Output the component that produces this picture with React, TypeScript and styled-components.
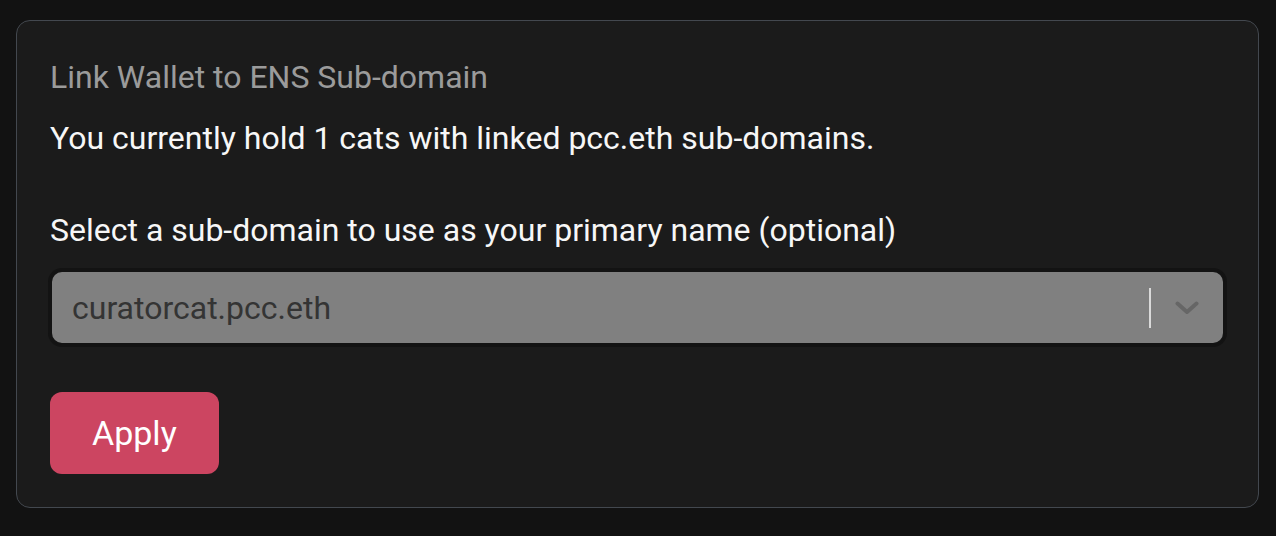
import React from "react";
import styled, { createGlobalStyle } from "styled-components";

const Global = createGlobalStyle`
  html, body {
    margin: 0;
    padding: 0;
    background: #121212;
    font-family: Roboto, "Liberation Sans", Arial, sans-serif;
  }
  * { box-sizing: border-box; }
`;

const Page = styled.div`
  padding: 20px 17px 28px 16px;
  min-height: 536px;
`;

const Card = styled.section`
  background: #1b1b1b;
  border: 1px solid #43484f;
  border-radius: 14px;
  padding: 37px 33px 33px 33px;
  display: flex;
  flex-direction: column;
  align-items: flex-start;
`;

const Title = styled.h2`
  margin: 0;
  font-size: 32px;
  line-height: 38px;
  font-weight: 400;
  color: #9b9b9b;
`;

const Text = styled.p<{ $top: number }>`
  margin: ${(p) => p.$top}px 0 0 0;
  font-size: 32px;
  line-height: 38px;
  font-weight: 400;
  color: #f7f7f7;
`;

const Select = styled.div`
  margin: 21px 0 0 0;
  align-self: stretch;
  height: 75px;
  background: #808080;
  border: 2px solid #131313;
  box-shadow: 0 0 0 2px #131313;
  border-radius: 12px;
  display: flex;
  align-items: center;
`;

const Value = styled.div`
  flex: 1;
  padding-left: 20px;
  font-size: 32px;
  color: #343434;
`;

const Indicators = styled.div`
  display: flex;
  align-items: center;
  height: 100%;
`;

const Separator = styled.span`
  width: 2px;
  height: 40px;
  background: #dadada;
`;

const Chevron = styled.div`
  width: 72px;
  display: flex;
  align-items: center;
  justify-content: center;
  color: #666666;
`;

const Button = styled.button`
  margin-top: 47px;
  height: 82px;
  padding: 0 42px;
  border: none;
  border-radius: 12px;
  background: #cc4561;
  color: #ffffff;
  font-family: inherit;
  font-size: 34px;
  font-weight: 400;
  cursor: pointer;
`;

export default function App() {
  return (
    <>
      <Global />
      <Page>
        <Card>
          <Title>Link Wallet to ENS Sub-domain</Title>
          <Text $top={23}>You currently hold 1 cats with linked pcc.eth sub-domains.</Text>
          <Text $top={54}>Select a sub-domain to use as your primary name (optional)</Text>
          <Select>
            <Value>curatorcat.pcc.eth</Value>
            <Indicators>
              <Separator />
              <Chevron>
                <svg width="24" height="14" viewBox="0 0 24 14" fill="none">
                  <path d="M2.5 2.5 L12 11 L21.5 2.5" stroke="currentColor" strokeWidth="4" strokeLinecap="round" strokeLinejoin="round" />
                </svg>
              </Chevron>
            </Indicators>
          </Select>
          <Button>Apply</Button>
        </Card>
      </Page>
    </>
  );
}
